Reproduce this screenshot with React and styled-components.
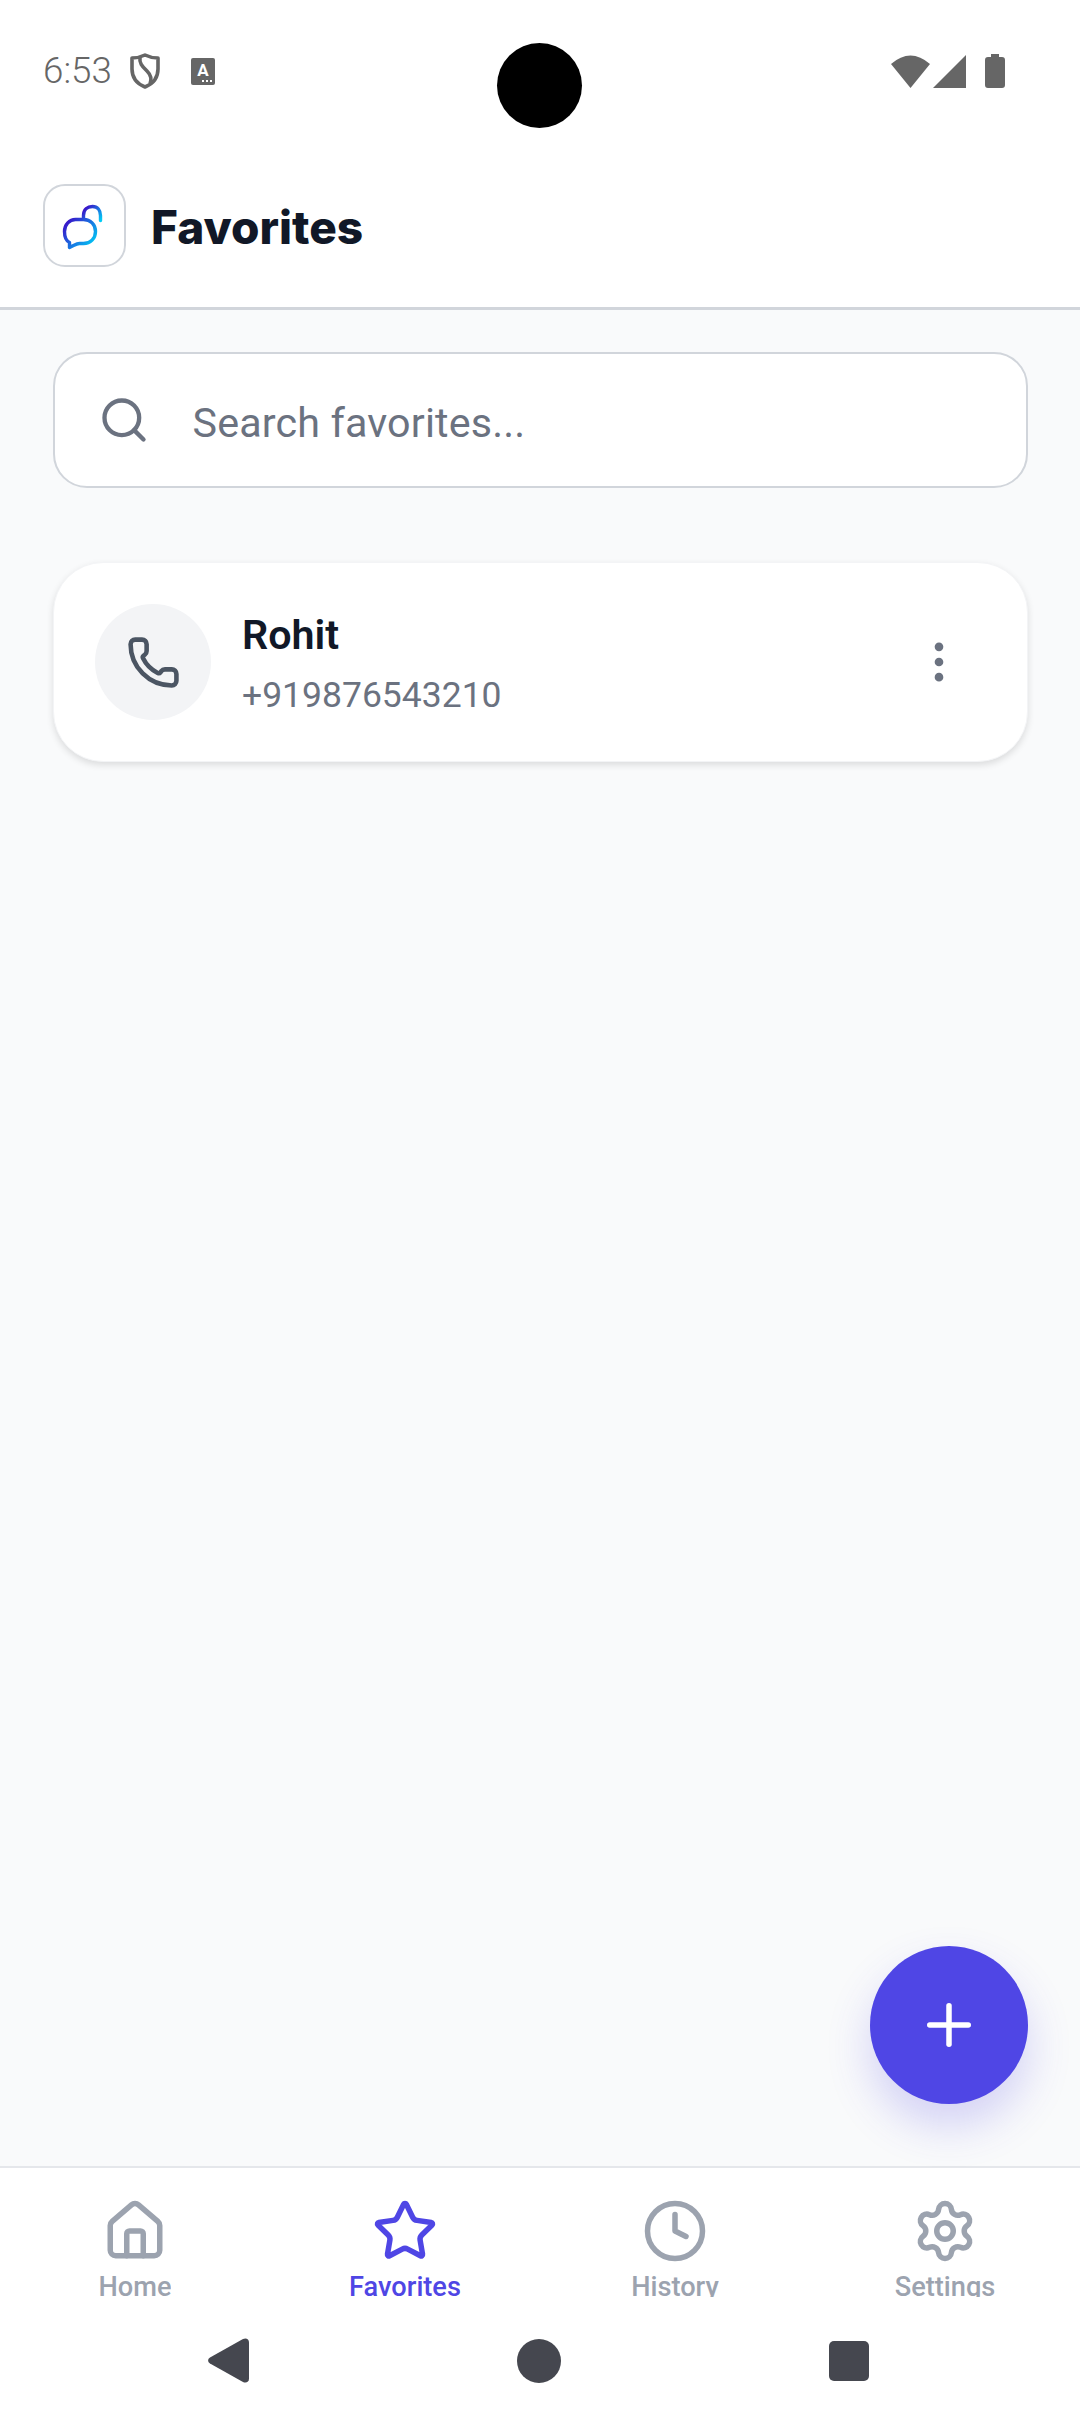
import React from 'react';
import styled, { createGlobalStyle } from 'styled-components';
import { Search, Phone, EllipsisVertical, Plus, House, Star, Clock, Settings } from 'lucide-react';

const GlobalStyle = createGlobalStyle`
  html, body {
    margin: 0;
    padding: 0;
    background: #fff;
  }
  * {
    box-sizing: border-box;
  }
`;

const Page = styled.div`
  position: relative;
  width: 1080px;
  height: 2424px;
  display: flex;
  flex-direction: column;
  overflow: hidden;
  background: #f9fafb;
  font-family: Roboto, "Liberation Sans", sans-serif;
`;

const StatusBar = styled.div`
  height: 142px;
  flex: none;
  display: flex;
  align-items: center;
  justify-content: space-between;
  padding: 0 75px 0 43px;
  background: #fff;
  color: #666;
`;

const StatusGroup = styled.div`
  display: flex;
  align-items: center;
`;

const Time = styled.span`
  font-size: 36.75px;
  font-weight: 300;
  line-height: 42px;
  margin-right: 18px;
`;

const KeyboardBadge = styled.div`
  position: relative;
  width: 24px;
  height: 27px;
  margin-left: 31px;
  border-radius: 2px;
  background: #666;
  color: #fff;
  font-size: 17px;
  font-weight: 700;
  line-height: 24px;
  text-align: center;
`;

const BadgeDots = styled.span`
  position: absolute;
  right: 3px;
  bottom: 3px;
  width: 10px;
  height: 2px;
  background: repeating-linear-gradient(90deg, #fff 0 2px, transparent 2px 4px);
`;

const Camera = styled.div`
  position: absolute;
  top: 43px;
  left: 497px;
  width: 85px;
  height: 85px;
  border-radius: 50%;
  background: #000;
`;

const Header = styled.header`
  flex: none;
  height: 168px;
  display: flex;
  align-items: flex-start;
  gap: 25px;
  padding: 42px 43px 0;
  background: #fff;
  border-bottom: 3px solid #d1d5db;
`;

const LogoBox = styled.div`
  width: 83px;
  height: 83px;
  flex: none;
  border: 2.5px solid #d1d5db;
  border-radius: 22px;
  background: #fff;
`;

const Title = styled.h1`
  margin: 2px 0 0;
  color: #111827;
  font-family: Inter, Roboto, sans-serif;
  font-size: 46px;
  font-weight: 800;
  line-height: 83px;
`;

const Main = styled.main`
  position: relative;
  flex: 1;
  display: flex;
  flex-direction: column;
  gap: 74px;
  padding: 42px 52px 0 53px;
`;

const SearchBox = styled.div`
  height: 136px;
  display: flex;
  align-items: center;
  gap: 43px;
  padding: 0 0 0 42.5px;
  background: #fff;
  border: 2.5px solid #d1d5db;
  border-radius: 34px;
  color: #6b7280;
`;

const Placeholder = styled.span`
  margin-top: 5px;
  font-size: 41.25px;
  letter-spacing: 0.15px;
`;

const ContactCard = styled.div`
  height: 200px;
  display: flex;
  align-items: center;
  padding: 0 41px;
  background: #fff;
  border: 1px solid #f3f4f6;
  border-radius: 50px;
  box-shadow: 0 3px 7px rgba(0, 0, 0, 0.12);
`;

const Avatar = styled.div`
  width: 116px;
  height: 116px;
  flex: none;
  display: flex;
  align-items: center;
  justify-content: center;
  border-radius: 50%;
  background: #f3f4f6;
  color: #4b5563;
`;

const ContactText = styled.div`
  flex: 1;
  margin-left: 31px;
`;

const ContactName = styled.div`
  color: #111827;
  font-family: Roboto, Inter, sans-serif;
  font-size: 41.25px;
  font-weight: 600;
  line-height: 52px;
  margin-top: 3px;
`;

const ContactPhone = styled.div`
  margin-top: 11px;
  color: #6b7280;
  font-size: 35.5px;
  line-height: 46px;
`;

const MenuButton = styled.div`
  display: flex;
  color: #6b7280;
  margin-right: 21px;
`;

const Fab = styled.div`
  position: absolute;
  right: 52px;
  bottom: 62px;
  width: 158px;
  height: 158px;
  display: flex;
  align-items: center;
  justify-content: center;
  border-radius: 50%;
  background: #4f46e5;
  color: #fff;
  box-shadow: 0 22px 44px rgba(79, 70, 229, 0.22);
`;

const TabBar = styled.nav`
  flex: none;
  height: 131px;
  display: grid;
  grid-template-columns: repeat(4, 270px);
  padding-top: 30px;
  background: #fff;
  border-top: 2px solid #e5e7eb;
`;

const Tab = styled.div`
  display: flex;
  flex-direction: column;
  align-items: center;
  gap: 7px;
  color: ${(p) => (p.$active ? '#4f46e5' : '#9ca3af')};
`;

const TabLabel = styled.span`
  display: block;
  height: 27px;
  overflow: hidden;
  font-size: 27.2px;
  font-weight: 500;
  line-height: 32px;
`;

const SystemNav = styled.div`
  flex: none;
  height: 127px;
  display: flex;
  align-items: center;
  justify-content: center;
  gap: 268px;
  padding-right: 3px;
  background: #fff;
  color: #45474f;
`;

const HomeDot = styled.div`
  width: 44px;
  height: 44px;
  border-radius: 50%;
  background: currentColor;
`;

const RecentSquare = styled.div`
  width: 40px;
  height: 40px;
  border-radius: 5px;
  background: currentColor;
`;

const tabs = [
  { label: 'Home', Icon: House },
  { label: 'Favorites', Icon: Star, active: true },
  { label: 'History', Icon: Clock },
  { label: 'Settings', Icon: Settings },
];

const Logo = () => (
  <svg width="78" height="78" viewBox="2.5 1.5 78 78" fill="none">
    <defs>
      <linearGradient id="bubbleGrad" gradientUnits="userSpaceOnUse" x1="24" y1="36" x2="52" y2="60">
        <stop offset="0" stopColor="#3a10c8" />
        <stop offset="0.5" stopColor="#1a6ee0" />
        <stop offset="1" stopColor="#00ccf5" />
      </linearGradient>
      <linearGradient id="arcGrad" gradientUnits="userSpaceOnUse" x1="44" y1="22" x2="58" y2="36">
        <stop offset="0" stopColor="#3a10c8" />
        <stop offset="1" stopColor="#00ccf5" />
      </linearGradient>
    </defs>
    <path
      d="M33 35H41C48 35 53 40 53 47C53 54 48 59 41 59H37C35 59 33 60 31 61L27 63L27 58C23 56 22 51 22 47C22 40 27 35 33 35Z"
      stroke="url(#bubbleGrad)"
      strokeWidth="3.4"
      strokeLinejoin="round"
    />
    <path
      d="M41 34V31C41 25 45 22 50 22C55 22 58 26 58 31V36"
      stroke="url(#arcGrad)"
      strokeWidth="3.4"
      strokeLinecap="round"
    />
  </svg>
);

const ShieldIcon = () => (
  <svg width="30" height="36" viewBox="0 0 30 36" fill="none" stroke="currentColor" strokeWidth="3.6">
    <path d="M15 2C19 4 24 5 28 5V16C28 25 22.500 31 15 34C7.500 31 2 25 2 16V5C6 5 11 4 15 2Z" strokeLinejoin="round" />
    <path d="M10 4C9 11 13 14 17 18C21 22 22 26 20 31" />
  </svg>
);

const WifiIcon = () => (
  <svg width="39" height="33" viewBox="0 0 39 33" fill="currentColor">
    <path d="M0 9Q19.500 -8 39 9L19.500 33Z" />
  </svg>
);

const SignalIcon = () => (
  <svg width="33" height="33" viewBox="0 0 33 33" fill="currentColor" style={{ marginLeft: 3 }}>
    <path d="M33 0V33H0Z" />
  </svg>
);

const BatteryIcon = () => (
  <svg width="20" height="34" viewBox="0 0 20 34" fill="currentColor" style={{ marginLeft: 19 }}>
    <path d="M6 0H14V3H17A3 3 0 0 1 20 6V31A3 3 0 0 1 17 34H3A3 3 0 0 1 0 31V6A3 3 0 0 1 3 3H6Z" />
  </svg>
);

const BackIcon = () => (
  <svg width="41" height="45" viewBox="0 0 41 45" fill="currentColor">
    <path d="M2 19.500L35 1C38 -0.500 41 1 41 4.500V40.500C41 44 38 45.500 35 44L2 25.500C-0.500 24 -0.500 21 2 19.500Z" />
  </svg>
);

export default function App() {
  return (
    <>
      <GlobalStyle />
      <Page>
        <StatusBar>
          <StatusGroup>
            <Time>6:53</Time>
            <ShieldIcon />
            <KeyboardBadge>
              A
              <BadgeDots />
            </KeyboardBadge>
          </StatusGroup>
          <StatusGroup>
            <WifiIcon />
            <SignalIcon />
            <BatteryIcon />
          </StatusGroup>
        </StatusBar>
        <Camera />

        <Header>
          <LogoBox>
            <Logo />
          </LogoBox>
          <Title>Favorites</Title>
        </Header>

        <Main>
          <SearchBox>
            <Search size={52} strokeWidth={2} />
            <Placeholder>Search favorites...</Placeholder>
          </SearchBox>

          <ContactCard>
            <Avatar>
              <Phone size={55} strokeWidth={2} />
            </Avatar>
            <ContactText>
              <ContactName>Rohit</ContactName>
              <ContactPhone>+919876543210</ContactPhone>
            </ContactText>
            <MenuButton>
              <EllipsisVertical size={52} strokeWidth={2} />
            </MenuButton>
          </ContactCard>

          <Fab>
            <Plus size={66} strokeWidth={2} />
          </Fab>
        </Main>

        <TabBar>
          {tabs.map(({ label, Icon, active }) => (
            <Tab key={label} $active={active}>
              <Icon size={66} strokeWidth={2} />
              <TabLabel>{label}</TabLabel>
            </Tab>
          ))}
        </TabBar>

        <SystemNav>
          <BackIcon />
          <HomeDot />
          <RecentSquare />
        </SystemNav>
      </Page>
    </>
  );
}
